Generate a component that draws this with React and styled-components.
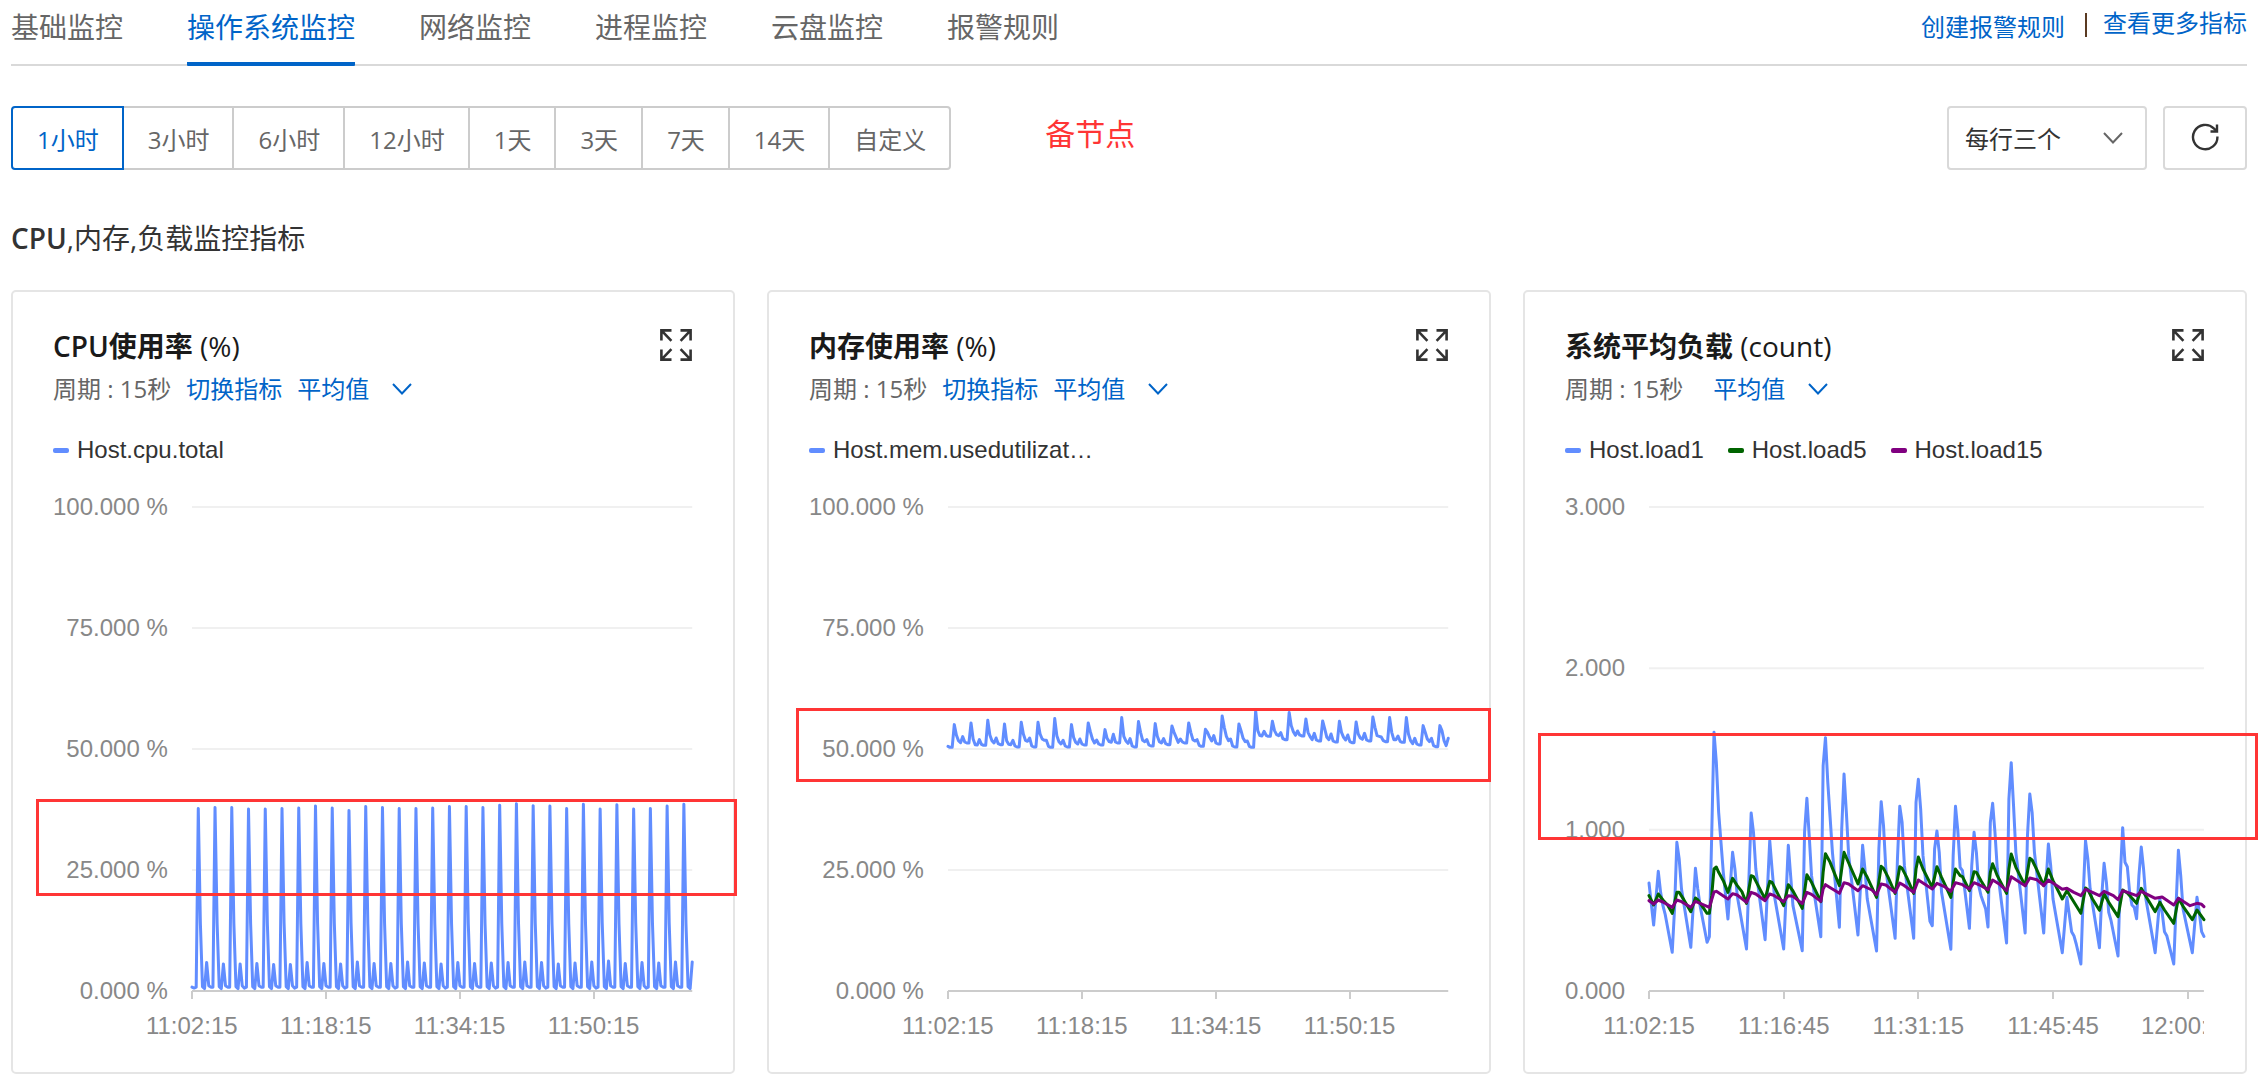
import React from 'react';
import styled, { createGlobalStyle } from 'styled-components';

const GlobalStyle = createGlobalStyle`
  * {
    box-sizing: border-box;
  }
  body {
    margin: 0;
    background: #fff;
    color: #333;
    font-family: "Open Sans", "Noto Sans CJK SC", sans-serif;
    font-size: 24px;
  }
  button, select {
    font: inherit;
    color: inherit;
  }
`;

const BLUE = '#0064c8';
const LINE_BLUE = '#618dff';

const Page = styled.main`
  padding: 0 17px 8px 11px;
`;

const Header = styled.header`
  display: flex;
  justify-content: space-between;
  border-bottom: 2px solid #d9d9d9;
`;

const Tabs = styled.nav`
  display: flex;
  gap: 64px;
  margin-bottom: -2px;
`;

const Tab = styled.button`
  padding: 7px 0 15px;
  border: 0;
  border-bottom: 4px solid ${props => (props.$active ? BLUE : 'transparent')};
  border-radius: 1px;
  background: none;
  color: ${props => (props.$active ? BLUE : '#666')};
  font-size: 28px;
  line-height: 40px;
  cursor: pointer;
`;

const HeaderLinks = styled.div`
  display: flex;
  align-items: center;
  gap: 16px;
  padding-bottom: 10px;
  line-height: 30px;
`;

const HeaderLink = styled.a`
  padding-bottom: ${props => (props.$raised ? '8px' : '0')};
  color: ${BLUE};
  text-decoration: none;
`;

const Separator = styled.span`
  width: 2px;
  height: 24px;
  margin: 0 0 4px 4px;
  background: #5a3a22;
`;

const Toolbar = styled.div`
  display: flex;
  align-items: center;
  margin-top: 40px;
`;

const RangeGroup = styled.div`
  display: flex;
`;

const RangeButton = styled.button`
  position: relative;
  z-index: ${props => (props.$active ? 1 : 0)};
  height: 64px;
  padding: 0 23px 0 24px;
  border: 2px solid ${props => (props.$active ? BLUE : '#ccc')};
  background: #fff;
  color: ${props => (props.$active ? BLUE : '#666')};
  cursor: pointer;
  & + & {
    margin-left: -2px;
  }
  &:first-child {
    border-radius: 4px 0 0 4px;
  }
  &:last-child {
    border-radius: 0 4px 4px 0;
  }
`;

const NodeNote = styled.strong`
  flex: 1;
  padding: 0 0 8px 94px;
  color: #ff3535;
  font-size: 30px;
  font-weight: 400;
  line-height: 40px;
`;

const SelectWrap = styled.span`
  display: inline-grid;
  align-items: center;
  color: ${props => (props.$link ? BLUE : '#666')};
  & > * {
    grid-area: 1 / 1;
  }
  & > svg {
    justify-self: end;
    margin-right: ${props => (props.$link ? '0' : '24px')};
    pointer-events: none;
  }
`;

const BoxSelect = styled.select`
  appearance: none;
  width: 200px;
  height: 64px;
  padding: 0 16px;
  border: 2px solid #d9d9d9;
  border-radius: 4px;
  background: #fff;
  color: #333;
`;

const LinkSelect = styled.select`
  appearance: none;
  padding: 0 43px 0 0;
  border: 0;
  background: none;
  line-height: 40px;
`;

const RefreshButton = styled.button`
  display: flex;
  align-items: center;
  justify-content: center;
  width: 84px;
  height: 64px;
  margin-left: 16px;
  padding: 0 0 2px;
  border: 2px solid #d9d9d9;
  border-radius: 4px;
  background: #fff;
  cursor: pointer;
`;

const SectionTitle = styled.h2`
  margin: 48px 0 32px;
  font-size: 28px;
  font-weight: 400;
  line-height: 40px;
`;

const Cards = styled.section`
  display: grid;
  grid-template-columns: repeat(3, minmax(0, 1fr));
  gap: 32px;
`;

const Card = styled.article`
  position: relative;
  padding: 33px 41px 34px 40px;
  border: 2px solid #e5e5e5;
  border-radius: 5px;
`;

const CardHead = styled.div`
  display: flex;
  justify-content: space-between;
  align-items: flex-start;
  padding-bottom: 2px;
`;

const CardTitle = styled.h3`
  margin: 0;
  color: #1a1a1a;
  font-size: 28px;
  font-weight: 700;
  line-height: 42px;
`;

const Latin = styled.span`
  font-weight: ${props => props.$weight};
`;

const ExpandButton = styled.button`
  display: flex;
  margin-top: 4px;
  padding: 0;
  border: 0;
  background: none;
  cursor: pointer;
`;

const CardMeta = styled.div`
  display: flex;
  gap: 15px;
  color: #666;
  line-height: 40px;
`;

const MetaLink = styled.a`
  color: ${BLUE};
  text-decoration: none;
`;

const Legend = styled.ul`
  display: flex;
  gap: 24px;
  margin: 29px 0 33px;
  padding: 0;
  list-style: none;
  font-family: "Liberation Sans", Arial, sans-serif;
  line-height: 24px;
`;

const LegendItem = styled.li`
  display: flex;
  align-items: center;
  gap: 8px;
  &::before {
    content: '';
    width: 16px;
    height: 5px;
    border-radius: 2px;
    background: ${props => props.$color};
  }
`;

const ChartGrid = styled.div`
  display: grid;
  grid-template-columns: auto minmax(0, 1fr);
  column-gap: 24px;
  color: #888;
  font-family: "Liberation Sans", Arial, sans-serif;
  line-height: 24px;
`;

const YAxis = styled.div`
  display: flex;
  flex-direction: column;
  justify-content: space-between;
  text-align: right;
`;

const Plot = styled.svg`
  display: block;
  width: 100%;
  height: 508px;
  padding: 12px 0;
  overflow: visible;
`;

const XAxis = styled.div`
  display: flex;
  grid-column: 2;
  margin: -12px 0 0 ${props => -props.$step / 2}%;
  overflow: hidden;
`;

const XLabel = styled.span`
  display: flex;
  flex: 0 0 auto;
  flex-direction: column;
  align-items: center;
  gap: 15px;
  &::before {
    content: '';
    width: 2px;
    height: 8px;
    background: #ccc;
  }
`;

/* hand-drawn marker box laid over a card */
const Highlight = styled.div`
  position: absolute;
  top: ${props => props.$box.top}px;
  left: ${props => props.$box.left}px;
  right: ${props => props.$box.right}px;
  height: ${props => props.$box.height}px;
  border: 3px solid #ff3535;
  pointer-events: none;
`;

const Chevron = () => (
  <svg width="20" height="12" viewBox="0 0 20 12" fill="none" stroke="currentColor" strokeWidth="2">
    <path d="M1 1l9 9.5L19 1" />
  </svg>
);

const RefreshIcon = () => (
  <svg width="28" height="28" viewBox="0 0 28 28" fill="none" stroke="#333" strokeWidth="2.4">
    <path d="M26.4 13.5A12.2 12.2 0 1 1 22.8 5.4L25.6 8" />
    <path d="M26 1.5v7h-6.5" />
  </svg>
);

const ExpandIcon = () => (
  <svg width="32" height="32" viewBox="0 0 32 32" fill="none" stroke="#333" strokeWidth="2.6">
    <path d="M11.5 1.4H1.4v10.1M1.4 1.4l10 10.4" />
    <path d="M20.5 1.4h10.1v10.1M30.6 1.4l-10 10.4" />
    <path d="M11.5 30.6H1.4V20.5M1.4 30.6l10-10.4" />
    <path d="M20.5 30.6h10.1V20.5M30.6 30.6l-10-10.4" />
  </svg>
);

// every series holds one hour of samples, one per 15 seconds
const LAST = 239;

// two minute cycle: [main peak, second peak]
const CPU_CYCLES = [
  [37.7, 5.9], [37.9, 5.6], [37.9, 5.6], [37.6, 5.7], [37.6, 5.5], [37.7, 5.5],
  [37.8, 5.9], [38.2, 5.7], [37.8, 5.6], [37.3, 6], [38.1, 5.7], [37.9, 5.7],
  [37.7, 6], [37.7, 5.8], [37.8, 5.6], [38.1, 5.9], [38.1, 5.7], [37.9, 5.8],
  [38.4, 5.9], [38.7, 6], [38.3, 5.9], [38.2, 5.6], [37.7, 5.8], [38.6, 6],
  [37.6, 6.2], [38.5, 5.7], [37.6, 5.9], [37.7, 5.8], [38.2, 6], [38.6, 6]
];
const cpu = CPU_CYCLES.flatMap(([peak, second], i) => [
  i ? 1.1 : 0.8, i % 3 ? 0.8 : 0.6, 0.8, peak, 14, 0.9, 0.5, second
]).map((v, i) => [i, v]);

// floor, peak, three falling samples and the bump, in steps above 50 %
const MEM_CYCLES = [
  [5, 73, 42, 25, 19, 37], [18, 78, 30, 13, 12, 28], [11, 86, 42, 25, 18, 33],
  [13, 75, 25, 14, 13, 26], [6, 80, 45, 26, 23, 33], [6, 80, 45, 30, 26, 26],
  [5, 91, 40, 22, 15, 26], [6, 73, 35, 20, 15, 30], [12, 78, 52, 30, 18, 27],
  [12, 58, 32, 22, 20, 44], [18, 94, 38, 24, 17, 31], [6, 82, 50, 26, 22, 28],
  [9, 76, 38, 22, 18, 31], [13, 69, 50, 35, 20, 30], [18, 78, 50, 28, 24, 28],
  [8, 59, 50, 35, 24, 40], [15, 99, 65, 38, 25, 30], [6, 75, 55, 32, 22, 24],
  [5, 114, 55, 40, 39, 53], [38, 83, 55, 43, 40, 49], [28, 109, 70, 52, 41, 54],
  [39, 90, 50, 37, 28, 47], [24, 84, 60, 35, 28, 45], [21, 83, 50, 35, 27, 42],
  [19, 81, 45, 33, 29, 47], [24, 96, 65, 40, 38, 36], [22, 94, 50, 28, 28, 39],
  [20, 94, 45, 25, 16, 32], [12, 70, 50, 30, 22, 32], [7, 70, 55, 25, 10, 32]
];
const mem = MEM_CYCLES.flatMap(([floor, peak, a, b, c, bump]) => [
  floor + 3, floor, floor, peak, a, b, c, bump
]).map((v, i) => [i, 50 + v * 0.069]);

// [sample, raw level] pairs, the raw level counts down from 846
const toLoad = text => text.split(' ').map(pair => {
  const [i, raw] = pair.split(':').map(Number);
  return [i, (846 - raw) / 484];
});
const load1 = toLoad(
  '0:522 2:648 4:487 5:550 6:590 7:617 10:730 11:600 12:400 13:450 14:540 18:715 20:478 21:540 22:590 25:700 26:683 ' +
  '27:380 28:70 29:160 30:310 32:490 34:630 36:430 37:480 38:560 42:720 44:312 45:370 46:480 50:692 52:395 53:480 ' +
  '54:560 58:720 60:409 61:500 62:590 66:725 67:370 68:268 69:380 70:500 74:683 75:170 76:86 77:220 79:430 82:655 ' +
  '83:360 84:195 85:310 86:440 90:678 92:409 93:480 94:570 98:726 99:420 100:278 101:350 102:480 106:688 107:450 ' +
  '108:292 109:340 110:470 114:688 115:280 116:211 117:300 118:440 121:637 122:650 123:420 124:366 125:430 126:550 ' +
  '130:721 131:440 132:292 133:365 134:475 135:485 138:658 139:470 140:370 141:430 142:530 143:560 145:600 146:654 ' +
  '147:340 148:283 149:370 150:480 154:702 155:270 156:161 157:290 158:430 162:672 163:380 164:255 165:310 166:430 ' +
  '170:672 171:520 172:405 173:470 174:570 178:731 180:565 182:668 183:680 184:705 186:765 187:560 188:395 189:450 ' +
  '190:540 194:716 195:560 196:463 197:520 198:610 199:635 202:741 203:500 204:356 205:460 206:473 207:550 208:588 ' +
  '209:595 210:629 211:500 212:414 213:480 214:570 218:731 220:570 221:610 222:668 223:680 226:765 227:590 228:424 ' +
  '229:500 230:600 234:731 236:565 237:610 238:668 239:682'
);
const load5 = toLoad(
  '0:560 2:588 4:555 6:573 8:588 10:613 12:550 13:550 15:572 18:608 20:567 21:572 25:613 26:613 27:560 28:480 29:474 ' +
  '30:490 32:515 34:550 36:508 38:530 40:548 42:583 44:500 45:503 47:530 50:570 52:517 53:520 55:548 58:590 60:527 ' +
  '62:546 66:598 68:497 70:520 74:578 75:490 76:434 78:460 82:530 83:480 84:430 86:462 90:525 92:480 94:505 98:565 ' +
  '100:472 101:478 103:505 106:553 108:473 109:478 111:505 114:553 115:480 116:444 118:480 122:535 124:473 126:505 ' +
  '130:565 131:520 132:480 134:500 135:503 138:545 140:488 141:490 143:515 146:550 147:490 148:464 150:500 154:553 ' +
  '155:480 156:435 158:475 162:530 164:448 165:453 167:482 170:530 172:480 174:515 178:570 180:545 182:568 186:613 ' +
  '188:537 189:542 191:570 194:604 196:555 198:580 202:623 204:543 206:552 210:583 212:538 214:562 218:608 220:580 ' +
  '222:603 226:643 228:568 230:592 234:632 236:603 239:632'
);
const load15 = toLoad(
  '0:575 2:585 4:573 6:579 10:595 12:573 14:578 18:595 20:577 26:595 28:549 29:547 34:570 36:554 38:558 42:580 44:550 ' +
  '46:555 50:575 52:555 54:560 58:578 60:560 62:562 66:584 68:550 70:556 74:577 75:540 76:527 82:553 84:521 86:525 ' +
  '90:545 92:530 96:543 98:557 100:525 102:528 106:550 108:522 110:530 114:550 116:513 122:540 124:523 127:532 130:547 ' +
  '132:521 135:527 138:540 140:521 143:530 146:542 148:513 151:526 154:545 156:503 162:530 164:507 167:512 170:530 ' +
  '172:513 178:541 180:538 183:550 186:560 188:541 191:550 194:560 196:547 200:560 202:572 204:545 210:560 212:547 ' +
  '218:568 221:564 226:588 228:568 233:590 236:583 238:586 239:593'
);

const PERCENT_TICKS = ['100.000 %', '75.000 %', '50.000 %', '25.000 %', '0.000 %'];

const CARDS = [
  {
    latin: 'CPU',
    name: '使用率',
    unit: '(%)',
    canSwitch: true,
    max: 100,
    yTicks: PERCENT_TICKS,
    xTicks: ['11:02:15', '11:18:15', '11:34:15', '11:50:15'],
    samplesPerTick: 64,
    series: [{ label: 'Host.cpu.total', color: LINE_BLUE, points: cpu }],
    box: { top: 507, left: 23, right: -4, height: 97 }
  },
  {
    name: '内存使用率',
    unit: '(%)',
    canSwitch: true,
    max: 100,
    yTicks: PERCENT_TICKS,
    xTicks: ['11:02:15', '11:18:15', '11:34:15', '11:50:15'],
    samplesPerTick: 64,
    series: [{ label: 'Host.mem.usedutilizat…', color: LINE_BLUE, points: mem }],
    box: { top: 416, left: 27, right: -2, height: 74 }
  },
  {
    name: '系统平均负载',
    unit: '(count)',
    canSwitch: false,
    max: 3,
    yTicks: ['3.000', '2.000', '1.000', '0.000'],
    xTicks: ['11:02:15', '11:16:45', '11:31:15', '11:45:45', '12:00:15'],
    samplesPerTick: 58,
    series: [
      { label: 'Host.load1', color: LINE_BLUE, points: load1 },
      { label: 'Host.load5', color: '#006400', points: load5 },
      { label: 'Host.load15', color: '#800080', points: load15 }
    ],
    box: { top: 441, left: 13, right: -13, height: 107 }
  }
];

const Chart = ({ max, yTicks, xTicks, samplesPerTick, series }) => {
  const step = samplesPerTick / LAST * 100;
  // the label strip starts half a step to the left of the plot
  const labelWidth = step / (100 + step / 2) * 100;
  return (
    <ChartGrid>
      <YAxis>
        { yTicks.map(tick => <span key={tick}>{ tick }</span>) }
      </YAxis>
      <Plot viewBox={`0 0 ${LAST} 100`} preserveAspectRatio="none" fill="none">
        { yTicks.map((tick, i) => {
          const y = i / (yTicks.length - 1) * 100;
          return (
            <path
              key={tick}
              d={`M0 ${y}H${LAST}`}
              stroke={i === yTicks.length - 1 ? '#ccc' : '#f0f0f0'}
              strokeWidth="2"
              vectorEffect="non-scaling-stroke"
            />
          );
        }) }
        { series.map(item => (
          <polyline
            key={item.label}
            points={item.points.map(([x, v]) => `${x},${100 - v / max * 100}`).join(' ')}
            stroke={item.color}
            strokeWidth="3"
            strokeLinejoin="round"
            strokeLinecap="round"
            vectorEffect="non-scaling-stroke"
          />
        )) }
      </Plot>
      <XAxis $step={step}>
        { xTicks.map(tick => (
          <XLabel key={tick} style={{ width: labelWidth + '%' }}>{ tick }</XLabel>
        )) }
      </XAxis>
    </ChartGrid>
  );
};

const MetricCard = ({ card }) => (
  <Card>
    <CardHead>
      <CardTitle>
        { card.latin && <Latin $weight={600}>{ card.latin }</Latin> }
        { card.name } <Latin $weight={500}>{ card.unit }</Latin>
      </CardTitle>
      <ExpandButton aria-label="全屏"><ExpandIcon /></ExpandButton>
    </CardHead>
    <CardMeta>
      <span>周期 : 15秒</span>
      { card.canSwitch ? <MetaLink href="#switch">切换指标</MetaLink> : <span /> }
      <SelectWrap $link>
        <LinkSelect aria-label="统计方式">
          <option>平均值</option>
        </LinkSelect>
        <Chevron />
      </SelectWrap>
    </CardMeta>
    <Legend>
      { card.series.map(item => (
        <LegendItem key={item.label} $color={item.color}>{ item.label }</LegendItem>
      )) }
    </Legend>
    <Chart {...card} />
    <Highlight $box={card.box} />
  </Card>
);

const TABS = ['基础监控', '操作系统监控', '网络监控', '进程监控', '云盘监控', '报警规则'];
const RANGES = ['1小时', '3小时', '6小时', '12小时', '1天', '3天', '7天', '14天', '自定义'];

const App = () => {
  const [tab, setTab] = React.useState(TABS[1]);
  const [range, setRange] = React.useState(RANGES[0]);
  return (
    <Page>
      <GlobalStyle />
      <Header>
        <Tabs>
          { TABS.map(name => (
            <Tab key={name} $active={name === tab} onClick={() => setTab(name)}>{ name }</Tab>
          )) }
        </Tabs>
        <HeaderLinks>
          <HeaderLink href="#create">创建报警规则</HeaderLink>
          <Separator />
          <HeaderLink href="#more" $raised>查看更多指标</HeaderLink>
        </HeaderLinks>
      </Header>
      <Toolbar>
        <RangeGroup>
          { RANGES.map(name => (
            <RangeButton key={name} $active={name === range} onClick={() => setRange(name)}>
              { name }
            </RangeButton>
          )) }
        </RangeGroup>
        <NodeNote>备节点</NodeNote>
        <SelectWrap>
          <BoxSelect aria-label="每行图表数">
            <option>每行三个</option>
          </BoxSelect>
          <Chevron />
        </SelectWrap>
        <RefreshButton aria-label="刷新"><RefreshIcon /></RefreshButton>
      </Toolbar>
      <SectionTitle><Latin $weight={600}>CPU</Latin>,内存,负载监控指标</SectionTitle>
      <Cards>
        { CARDS.map(card => <MetricCard key={card.name} card={card} />) }
      </Cards>
    </Page>
  );
};

export default App;
